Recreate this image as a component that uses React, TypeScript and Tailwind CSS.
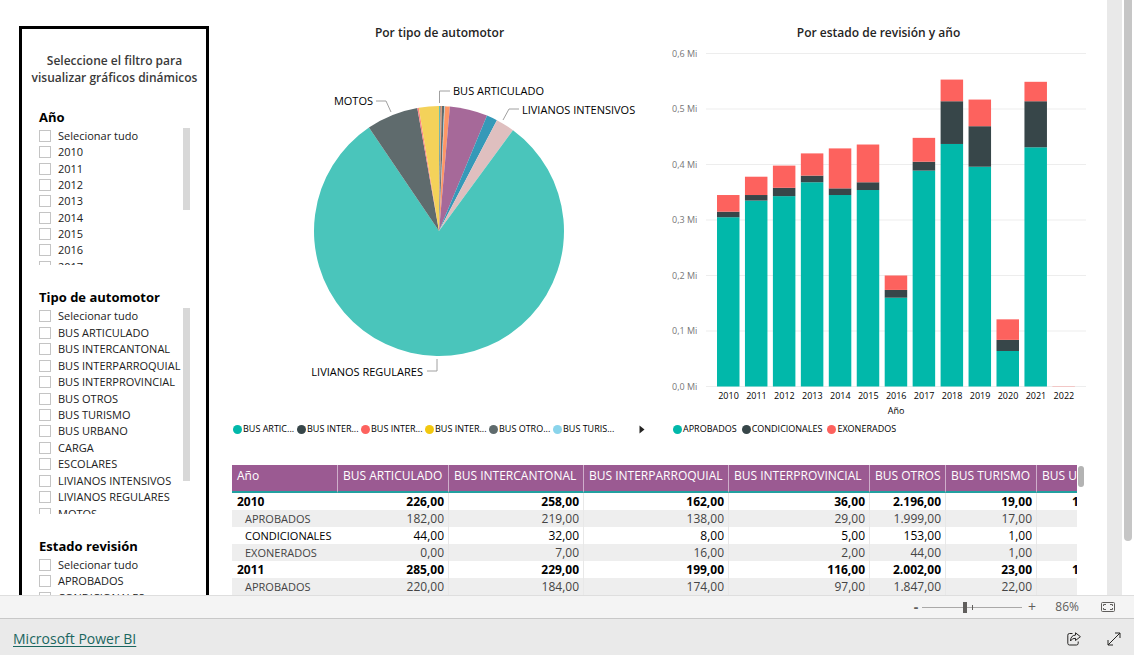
import { useState } from "react";

const years = ["2010", "2011", "2012", "2013", "2014", "2015", "2016", "2017"];

const vehicleTypes = [
  "BUS ARTICULADO",
  "BUS INTERCANTONAL",
  "BUS INTERPARROQUIAL",
  "BUS INTERPROVINCIAL",
  "BUS OTROS",
  "BUS TURISMO",
  "BUS URBANO",
  "CARGA",
  "ESCOLARES",
  "LIVIANOS INTENSIVOS",
  "LIVIANOS REGULARES",
  "MOTOS",
];

const statuses = ["APROBADOS", "CONDICIONALES", "EXONERADOS"];

// start and end in degrees, clockwise from the top
const slices = [
  { from: 0, to: 0.4, color: "#4ac5bb" },
  { from: 0.4, to: 0.8, color: "#5f6b6d" },
  { from: 0.8, to: 1.3, color: "#fe9666" },
  { from: 1.3, to: 2.4, color: "#5f6b6d" },
  { from: 2.4, to: 2.7, color: "#8ad4eb" },
  { from: 2.7, to: 5, color: "#fe9666" },
  { from: 5, to: 22.6, color: "#a66999" },
  { from: 22.6, to: 27.6, color: "#3599b8" },
  { from: 27.6, to: 36.3, color: "#dfbfbf" },
  { from: 36.3, to: 325.9, color: "#4ac5bb" },
  { from: 325.9, to: 350, color: "#5f6b6d" },
  { from: 350, to: 350.7, color: "#fb8281" },
  { from: 350.7, to: 360, color: "#f4d25a" },
];

const pieLabels = [
  { text: "BUS ARTICULADO", x: 221, y: 55, anchor: "start", line: "207.5,63 207.5,51 218,51" },
  { text: "LIVIANOS INTENSIVOS", x: 290, y: 74, anchor: "start", line: "271,80 277,69 287,69" },
  { text: "MOTOS", x: 141, y: 65, anchor: "end", line: "159,72 154,61 144,61" },
  { text: "LIVIANOS REGULARES", x: 191, y: 336, anchor: "end", line: "205,319 205,331 195,331" },
] as const;

const pieLegend = [
  { text: "BUS ARTIC...", color: "#01b8aa" },
  { text: "BUS INTER...", color: "#374649" },
  { text: "BUS INTER...", color: "#fd625e" },
  { text: "BUS INTER...", color: "#f2c80f" },
  { text: "BUS OTRO...", color: "#5f6b6d" },
  { text: "BUS TURIS...", color: "#8ad4eb" },
];

const barLegend = [
  { text: "APROBADOS", color: "#01b8aa" },
  { text: "CONDICIONALES", color: "#374649" },
  { text: "EXONERADOS", color: "#fd625e" },
];

// thousands of vehicles: approved, conditional, exempt
const bars = [
  { year: 2010, values: [305, 10, 30] },
  { year: 2011, values: [335, 10, 33] },
  { year: 2012, values: [343, 15, 40] },
  { year: 2013, values: [368, 12, 40] },
  { year: 2014, values: [345, 12, 72] },
  { year: 2015, values: [354, 14, 68] },
  { year: 2016, values: [160, 14, 26] },
  { year: 2017, values: [389, 16, 43] },
  { year: 2018, values: [437, 77, 39] },
  { year: 2019, values: [396, 73, 48] },
  { year: 2020, values: [64, 20, 37] },
  { year: 2021, values: [431, 83, 35] },
  { year: 2022, values: [0, 0, 0.5] },
];

const columns = [
  { name: "Año", width: "w-[106px]" },
  { name: "BUS ARTICULADO", width: "w-[111px]" },
  { name: "BUS INTERCANTONAL", width: "w-[135px]" },
  { name: "BUS INTERPARROQUIAL", width: "w-[145px]" },
  { name: "BUS INTERPROVINCIAL", width: "w-[141px]" },
  { name: "BUS OTROS", width: "w-[76px]" },
  { name: "BUS TURISMO", width: "w-[91px]" },
  { name: "BUS URBANO", width: "w-[88px]" },
];

const rows = [
  { label: "2010", total: true, values: ["226,00", "258,00", "162,00", "36,00", "2.196,00", "19,00", "1.148,00"] },
  { label: "APROBADOS", values: ["182,00", "219,00", "138,00", "29,00", "1.999,00", "17,00", ""] },
  { label: "CONDICIONALES", values: ["44,00", "32,00", "8,00", "5,00", "153,00", "1,00", ""] },
  { label: "EXONERADOS", values: ["0,00", "7,00", "16,00", "2,00", "44,00", "1,00", ""] },
  { label: "2011", total: true, values: ["285,00", "229,00", "199,00", "116,00", "2.002,00", "23,00", "1.148,00"] },
  { label: "APROBADOS", values: ["220,00", "184,00", "174,00", "97,00", "1.847,00", "22,00", ""] },
];

function slicePath(from: number, to: number) {
  const point = (deg: number) => {
    const rad = (deg * Math.PI) / 180;
    return `${207 + 125 * Math.sin(rad)} ${191 - 125 * Math.cos(rad)}`;
  };
  return `M207 191L${point(from)}A125 125 0 ${to - from > 180 ? 1 : 0} 1 ${point(to)}Z`;
}

type SlicerProps = {
  title: string;
  options: string[];
  viewport: string;
  listHeight: string;
  thumb?: string;
};

function Slicer({ title, options, viewport, listHeight, thumb }: SlicerProps) {
  return (
    <fieldset>
      <legend className="text-[13px] leading-5 font-bold text-black">{title}</legend>
      <div className={`flex overflow-hidden pt-px ${viewport}`}>
        <div className={`grid flex-1 auto-rows-fr ${listHeight}`}>
          {["Selecionar tudo", ...options].map((option) => (
            <label key={option} className="flex items-center gap-[7px] text-[11px] leading-4 whitespace-nowrap text-[#212121]">
              <input type="checkbox" className="size-3 shrink-0 appearance-none border border-[#c4c4c4] bg-white checked:bg-[#01b8aa]" />
              {option}
            </label>
          ))}
        </div>
        {thumb && <div className={`w-[7px] shrink-0 bg-[#d8d8d8] ${thumb}`} />}
      </div>
    </fieldset>
  );
}

function PieChart() {
  return (
    <section>
      <h2 className="text-center text-xs leading-[14px] font-semibold text-[#252423]">Por tipo de automotor</h2>
      <svg viewBox="0 0 415 380" className="w-full">
        {slices.map((slice) => (
          <path key={slice.from} d={slicePath(slice.from, slice.to)} fill={slice.color} />
        ))}
        {pieLabels.map((label) => (
          <g key={label.text}>
            <polyline points={label.line} fill="none" stroke="#a0a0a0" />
            <text x={label.x} y={label.y} textAnchor={label.anchor} className="fill-black text-[11px]">
              {label.text}
            </text>
          </g>
        ))}
      </svg>
      <div className="flex h-[18px] items-center pl-px">
        {pieLegend.map((item, i) => (
          <div key={i} className="flex w-16 items-center gap-px text-[9px] leading-4 whitespace-nowrap text-black">
            <span className="size-[9px] shrink-0 rounded-full" style={{ background: item.color }} />
            {item.text}
          </div>
        ))}
        <button aria-label="Siguiente" className="ml-[22px]">
          <svg viewBox="0 0 6 9" className="h-[9px] w-1.5">
            <path d="M0.5 0.5L5.5 4.5L0.5 8.5Z" fill="#252423" />
          </svg>
        </button>
      </div>
    </section>
  );
}

function BarChart() {
  const base = 346.5;
  const scale = 0.555;

  return (
    <section>
      <h2 className="text-center text-xs leading-[14px] font-semibold text-[#252423]">Por estado de revisión y año</h2>
      <svg viewBox="0 0 415 380" className="w-full">
        {[0, 1, 2, 3, 4, 5, 6].map((tick) => (
          <g key={tick}>
            <line x1="35" x2="415" y1={base - tick * 55.5} y2={base - tick * 55.5} stroke="#ededed" />
            <text x="1" y={base - tick * 55.5 + 3} className="fill-[#777777] text-[9px]">
              0,{tick} Mi
            </text>
          </g>
        ))}
        {bars.map((bar, i) => {
          const x = 46 + i * 27.95;
          let top = base;
          return (
            <g key={bar.year}>
              {bar.values.map((value, j) => {
                top -= value * scale;
                return <rect key={j} x={x} y={top} width="22.5" height={value * scale} fill={barLegend[j].color} />;
              })}
              <text x={x + 11.5} y="359" textAnchor="middle" className="fill-black text-[9px]">
                {bar.year}
              </text>
            </g>
          );
        })}
        <text x="225" y="374" textAnchor="middle" className="fill-black text-[9px]">Año</text>
      </svg>
      <div className="flex h-[18px] items-center gap-[5px] pl-0.5">
        {barLegend.map((item) => (
          <div key={item.text} className="flex items-center gap-px text-[9px] leading-4 whitespace-nowrap text-black">
            <span className="size-[9px] shrink-0 rounded-full" style={{ background: item.color }} />
            {item.text}
          </div>
        ))}
      </div>
    </section>
  );
}

function DataTable() {
  return (
    <div className="mt-[27px] flex gap-px pr-0.5">
      <div className="min-w-0 flex-1 overflow-hidden">
        <table className="w-[893px] table-fixed border-separate border-spacing-0 text-xs">
          <thead>
            <tr className="h-7 bg-[#9b5a92] text-white">
              {columns.map((column) => (
                <th
                  key={column.name}
                  className={`border-r border-b-2 border-r-[#cfaecb] border-b-[#22a0a0] py-0.5 pr-0 pl-[5px] text-left align-top leading-[18px] font-normal whitespace-nowrap ${column.width}`}
                >
                  {column.name}
                </th>
              ))}
            </tr>
          </thead>
          <tbody>
            {rows.map((row, i) => (
              <tr
                key={i}
                className={`h-[17px] ${i % 2 ? "bg-[#eeeeee] text-[#444444]" : "bg-white text-black"} ${row.total ? "font-bold" : ""}`}
              >
                <th className={`p-0 text-left leading-[17px] whitespace-nowrap ${row.total ? "pl-[5px] font-bold" : "pl-[13px] text-[11px] font-normal"}`}>
                  {row.label}
                </th>
                {row.values.map((value, j) => (
                  <td key={j} className="border-r border-[#e8e8e8] p-0 pr-1 text-right leading-[17px]">
                    {value}
                  </td>
                ))}
              </tr>
            ))}
          </tbody>
        </table>
      </div>
      <div className="mt-px h-[21px] w-1.5 rounded-full bg-[#b3b3b3]" />
    </div>
  );
}

function ZoomBar() {
  const [zoom, setZoom] = useState(86);

  return (
    <div className="flex h-6 shrink-0 items-center justify-end border-y border-t-[#dedede] border-b-[#c8c8c8] bg-[#f4f4f4] pr-[19px] text-[#605e5c]">
      <button aria-label="Alejar" onClick={() => setZoom(zoom - 10)} className="w-3 text-sm leading-4 font-bold">
        -
      </button>
      <div className="relative flex w-[100px] items-center">
        <input
          type="range"
          aria-label="Zoom"
          min={0}
          max={200}
          value={zoom}
          onChange={(e) => setZoom(Number(e.target.value))}
          className="h-[11px] w-full appearance-none bg-linear-to-b from-transparent from-45% via-[#605e5c] via-45% to-transparent to-55% [&::-webkit-slider-thumb]:h-[11px] [&::-webkit-slider-thumb]:w-1 [&::-webkit-slider-thumb]:appearance-none [&::-webkit-slider-thumb]:bg-[#605e5c]"
        />
        <span className="absolute left-1/2 h-[5px] w-px bg-[#605e5c]" />
      </div>
      <button aria-label="Acercar" onClick={() => setZoom(zoom + 10)} className="w-5 text-sm leading-4">
        +
      </button>
      <span className="w-[37px] text-right text-xs">{zoom}%</span>
      <button aria-label="Ajustar a la página" className="ml-[22px]">
        <svg viewBox="0 0 14 10" className="h-2.5 w-3.5" fill="none" stroke="#605e5c">
          <rect x="0.5" y="0.5" width="13" height="9" rx="1" />
          <path d="M5 2.5H2.5V4M2.5 6V7.5H5M9 2.5H11.5V4M11.5 6V7.5H9" />
        </svg>
      </button>
    </div>
  );
}

export default function App() {
  return (
    <div className="flex h-screen flex-col overflow-hidden bg-white font-['Open_Sans','Noto_Sans',sans-serif]">
      <main className="flex min-h-0 flex-1 overflow-hidden">
        <div className="flex min-w-0 flex-1 gap-[23px] pt-[26px] pr-[21px] pl-[19px]">
          <aside className="flex h-[760px] w-[190px] shrink-0 flex-col border-[3px] border-black pt-[23px] pr-4 pl-[17px]">
            <p className="-mx-3 text-center text-xs leading-[17px] font-semibold text-[#3a3a3a]">
              Seleccione el filtro para visualizar gráficos dinámicos
            </p>
            <div className="flex flex-col gap-[22px] pt-[21px]">
              <Slicer title="Año" options={years} viewport="h-[138px]" listHeight="h-[147px]" thumb="h-[82px]" />
              <Slicer title="Tipo de automotor" options={vehicleTypes} viewport="h-[207px]" listHeight="h-[214px]" thumb="h-[173px]" />
              <Slicer title="Estado revisión" options={statuses} viewport="h-[67px]" listHeight="h-[65px]" />
            </div>
          </aside>
          <div className="min-w-0 flex-1">
            <div className="grid grid-cols-2 gap-6">
              <PieChart />
              <BarChart />
            </div>
            <DataTable />
          </div>
        </div>
        <div className="w-[15px] shrink-0 bg-[#e9e9e9]" />
        <div className="w-3 shrink-0 px-0.5">
          <div className="h-[91%] rounded-b-full bg-[#c6c6c6]" />
        </div>
      </main>
      <ZoomBar />
      <footer className="flex h-9 shrink-0 items-center bg-[#eaeaea] pt-1 pr-[13px] pl-[13px]">
        <a href="#" className="text-sm leading-5 text-[#1a665f] underline underline-offset-2">
          Microsoft Power BI
        </a>
        <button aria-label="Compartir" className="ml-auto">
          <svg viewBox="0 0 14 14" className="size-3.5" fill="none" stroke="#252423" strokeLinejoin="round">
            <path d="M5.5 1.5H2.5Q0.8 1.5 0.8 3.2V11.3Q0.8 13 2.5 13H9.5Q11.2 13 11.2 11.3V9.5" />
            <path d="M8.5 0.8L13.4 4.7L8.5 8.5V6.3Q5.2 6 3.5 9Q3.6 3.4 8.5 3.1Z" />
          </svg>
        </button>
        <button aria-label="Pantalla completa" className="ml-[26px]">
          <svg viewBox="0 0 14 14" className="size-3.5" fill="none" stroke="#252423">
            <path d="M1 13L13 1M8 1H13V6M1 8V13H6" />
          </svg>
        </button>
      </footer>
    </div>
  );
}
